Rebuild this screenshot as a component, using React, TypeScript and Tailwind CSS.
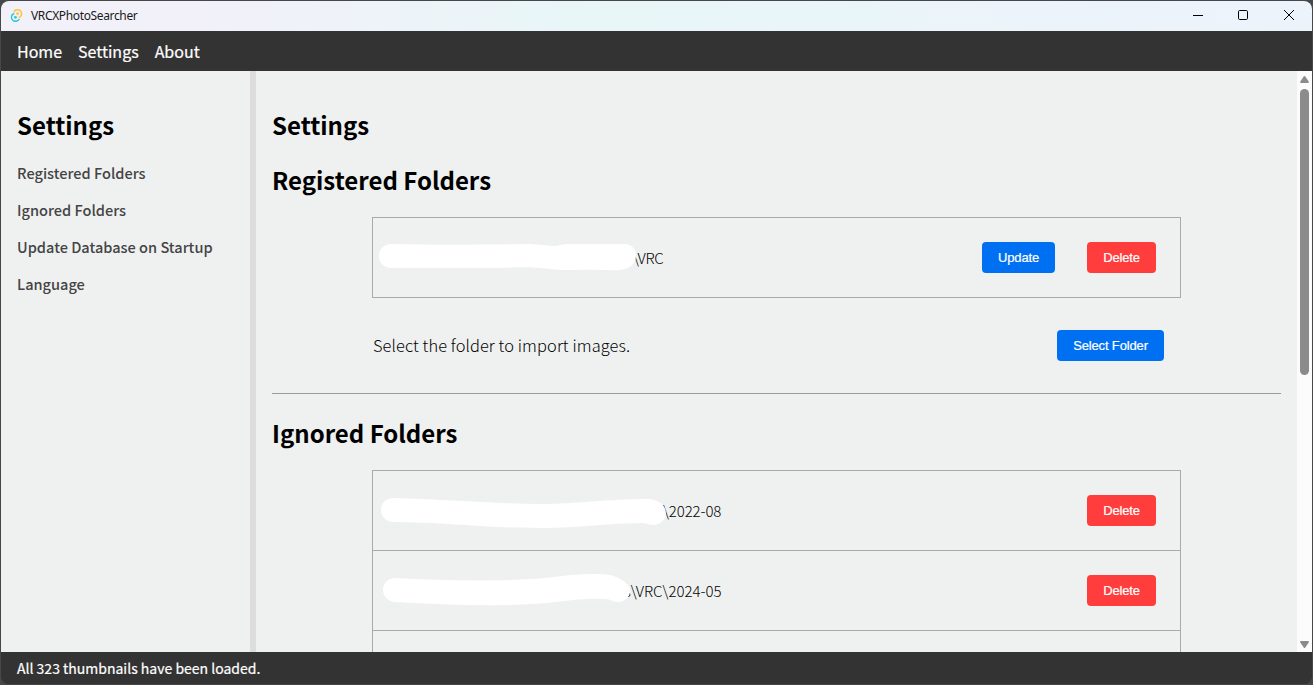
import type { ReactNode } from "react";

const navItems = ["Home", "Settings", "About"];
const sections = ["Registered Folders", "Ignored Folders", "Update Database on Startup", "Language"];

function Button({ children, className }: { children: ReactNode; className: string }) {
  return (
    <button
      className={`h-[31px] shrink-0 whitespace-nowrap rounded-[4px] text-center font-['Liberation_Sans',sans-serif] text-[13px] leading-[15px] tracking-[-0.15px] text-white [-webkit-text-stroke:0.2px_white] ${className}`}
    >
      {children}
    </button>
  );
}

function Heading({ children, className = "" }: { children: ReactNode; className?: string }) {
  return <h2 className={`h-[39px] whitespace-nowrap text-[24px] font-bold leading-[38px] text-black ${className}`}>{children}</h2>;
}

function TitleBar() {
  return (
    <header className="flex h-[30px] shrink-0 items-center bg-linear-to-r from-[#f2f1f9] from-15% via-[#e8f6f8] via-45% to-[#edf3fb] pl-[9px]">
      <svg width="13" height="13" viewBox="0 0 24 24" className="mb-0.5 shrink-0">
        <path
          d="M13.912 0a8.72 8.72 0 0 0-8.308 6.139c1.05-.515 2.18-.845 3.342-.976 2.415-3.363 7.4-3.412 9.88-.097 2.48 3.315 1.025 8.084-2.883 9.45a6.131 6.131 0 0 1-.3 2.762 8.72 8.72 0 0 0 3.01-1.225A8.72 8.72 0 0 0 13.913 0z"
          fill="#ffc131"
        />
        <path
          d="M8.365 6.721a8.72 8.72 0 0 0-3.031 1.235 8.72 8.72 0 1 0 13.06 9.913 10.174 10.174 0 0 1-3.343.99 6.125 6.125 0 0 1-9.892.097c-2.485-3.31-1.03-8.08 2.878-9.446a6.2 6.2 0 0 1 .328-2.789z"
          fill="#24c8db"
        />
        <circle cx="13.9" cy="8.7" r="2.5" fill="#ffc131" />
        <circle cx="10.1" cy="15.3" r="2.5" fill="#24c8db" />
      </svg>
      <span className="ml-2 font-['Noto_Sans',sans-serif] text-[12px] leading-4 tracking-[-0.36px] text-[#191919]">VRCXPhotoSearcher</span>
      <div className="mb-0.5 ml-auto flex pr-[17px] text-black">
        <svg width="103" height="12" viewBox="0 0 103 12" fill="none" stroke="currentColor">
          <path d="M1 6.5h10" />
          <rect x="46.5" y="1.5" width="9" height="9" rx="1.2" />
          <path d="M92 1l10 10M102 1L92 11" />
        </svg>
      </div>
    </header>
  );
}

function FolderRow({ mask, path, update = false, suffixClass }: { mask: string; path: string; update?: boolean; suffixClass: string }) {
  return (
    <div className="relative flex h-20 items-center border-b border-[#a9abab] pr-6">
      <span className={`whitespace-pre text-[15px] leading-6 font-light ${suffixClass}`}>{path}</span>
      <svg className="absolute left-0 top-0" width="310" height="79" viewBox="0 0 310 79">
        <path d={mask} fill="#fff" />
      </svg>
      <div className="ml-auto flex gap-8">
        {update && <Button className="w-[73px] bg-[#0070f3]">Update</Button>}
        <Button className="w-[69px] bg-[#ff3d3d]">Delete</Button>
      </div>
    </div>
  );
}

export default function App() {
  return (
    <div className="h-[685px] w-[1313px] overflow-hidden bg-[#464749] p-px font-['Noto_Sans_CJK_JP',sans-serif]">
      <div className="flex h-[683px] flex-col overflow-hidden rounded-[8px] bg-[#333]">
        <TitleBar />
        <nav className="flex h-10 shrink-0 items-center gap-4 bg-[#333] px-4 text-[16px] leading-6 text-white [-webkit-text-stroke:0.2px_white]">
          {navItems.map((n) => (
            <a key={n}>{n}</a>
          ))}
        </nav>
        <div className="flex h-[581px] shrink-0 bg-[#eff1f1]">
          <aside className="w-[249px] shrink-0 px-4 pt-[35px]">
            <Heading>Settings</Heading>
            <ul className="mt-4 flex flex-col gap-[13px] text-[14.57px] font-medium leading-6 text-[#444]">
              {sections.map((s) => (
                <li key={s} className="whitespace-nowrap">{s}</li>
              ))}
            </ul>
          </aside>
          <div className="w-1.5 shrink-0 bg-[#dddddd]" />
          <main className="h-full min-w-0 flex-1 overflow-hidden px-4 pt-[35px] text-black">
            <Heading>Settings</Heading>
            <Heading className="mt-4">Registered Folders</Heading>
            <div className="ml-[100px] mt-[17px] w-[809px] border border-b-0 border-[#a9abab]">
              <FolderRow
                update
                path="\VRC"
                suffixClass="ml-[260px] tracking-[-0.4px]"
                mask="M18 26C55 27 100 27 152 26C165 26 174 28 183 28C188 27 191 26 197 26H251C267 26 267 48 251 51C247 53 240 52 232 52C210 51 193 53 177 51C163 49 147 49 126 50C85 50 50 50 18 50C2 49 2 27 18 26Z"
              />
            </div>
            <div className="ml-[101px] mt-8 flex h-[31px] w-[791px] items-center justify-between">
              <p className="mb-px whitespace-nowrap text-[16.4px] leading-6 font-light tracking-[0.1px]">Select the folder to import images.</p>
              <Button className="w-[107px] bg-[#0070f3]">Select Folder</Button>
            </div>
            <hr className="mt-8 h-px border-0 bg-[#999b9b]" />
            <Heading className="mt-5">Ignored Folders</Heading>
            <div className="ml-[100px] mt-[17px] w-[809px] border border-b-0 border-[#a9abab]">
              <FolderRow
                path="\2022-08"
                suffixClass="ml-[290px] tracking-[-0.1px]"
                mask="M20 27C70 28 119 33 168 33C205 33 233 28 276 28C296 30 297 48 285 53C280 55 276 53 270 52C240 52 203 57 168 57C111 57 70 51 20 51C4 49 4 28 20 27Z"
              />
              <FolderRow
                path="s\VRC\2024-05"
                suffixClass="ml-[251px]"
                mask="M22 27C73 30 125 30 159 28C180 27 193 23 225 23C239 23 251 27 257 37C258 45 253 51 245 51C239 51 238 48 233 48C209 47 194 50 174 52C126 56 74 54 22 51C6 49 6 28 22 27Z"
              />
              <div className="h-20" />
            </div>
          </main>
          <div className="flex w-[15px] shrink-0 flex-col items-center bg-[#fcfcfc]">
            <svg width="9" height="18" viewBox="0 0 9 18" fill="#8b8b8b">
              <path d="M3.7 5.6Q4.5 4.6 5.3 5.6L8.7 10.5Q9.2 12 8 12H1Q-.2 12 .3 10.5Z" />
            </svg>
            <div className="h-[286px] w-[9px] rounded-full bg-[#8b8b8b]" />
            <svg className="mt-auto" width="9" height="15" viewBox="0 0 9 15" fill="#8b8b8b">
              <path d="M1 4H8Q9.2 4 8.7 5.5L5.3 10.4Q4.5 11.4 3.7 10.4L.3 5.5Q-.2 4 1 4Z" />
            </svg>
          </div>
        </div>
        <footer className="flex h-8 shrink-0 items-center bg-[#333] px-4 pb-px text-[14px] leading-5 text-white [-webkit-text-stroke:0.2px_white]">
          All 323 thumbnails have been loaded.
        </footer>
      </div>
    </div>
  );
}
